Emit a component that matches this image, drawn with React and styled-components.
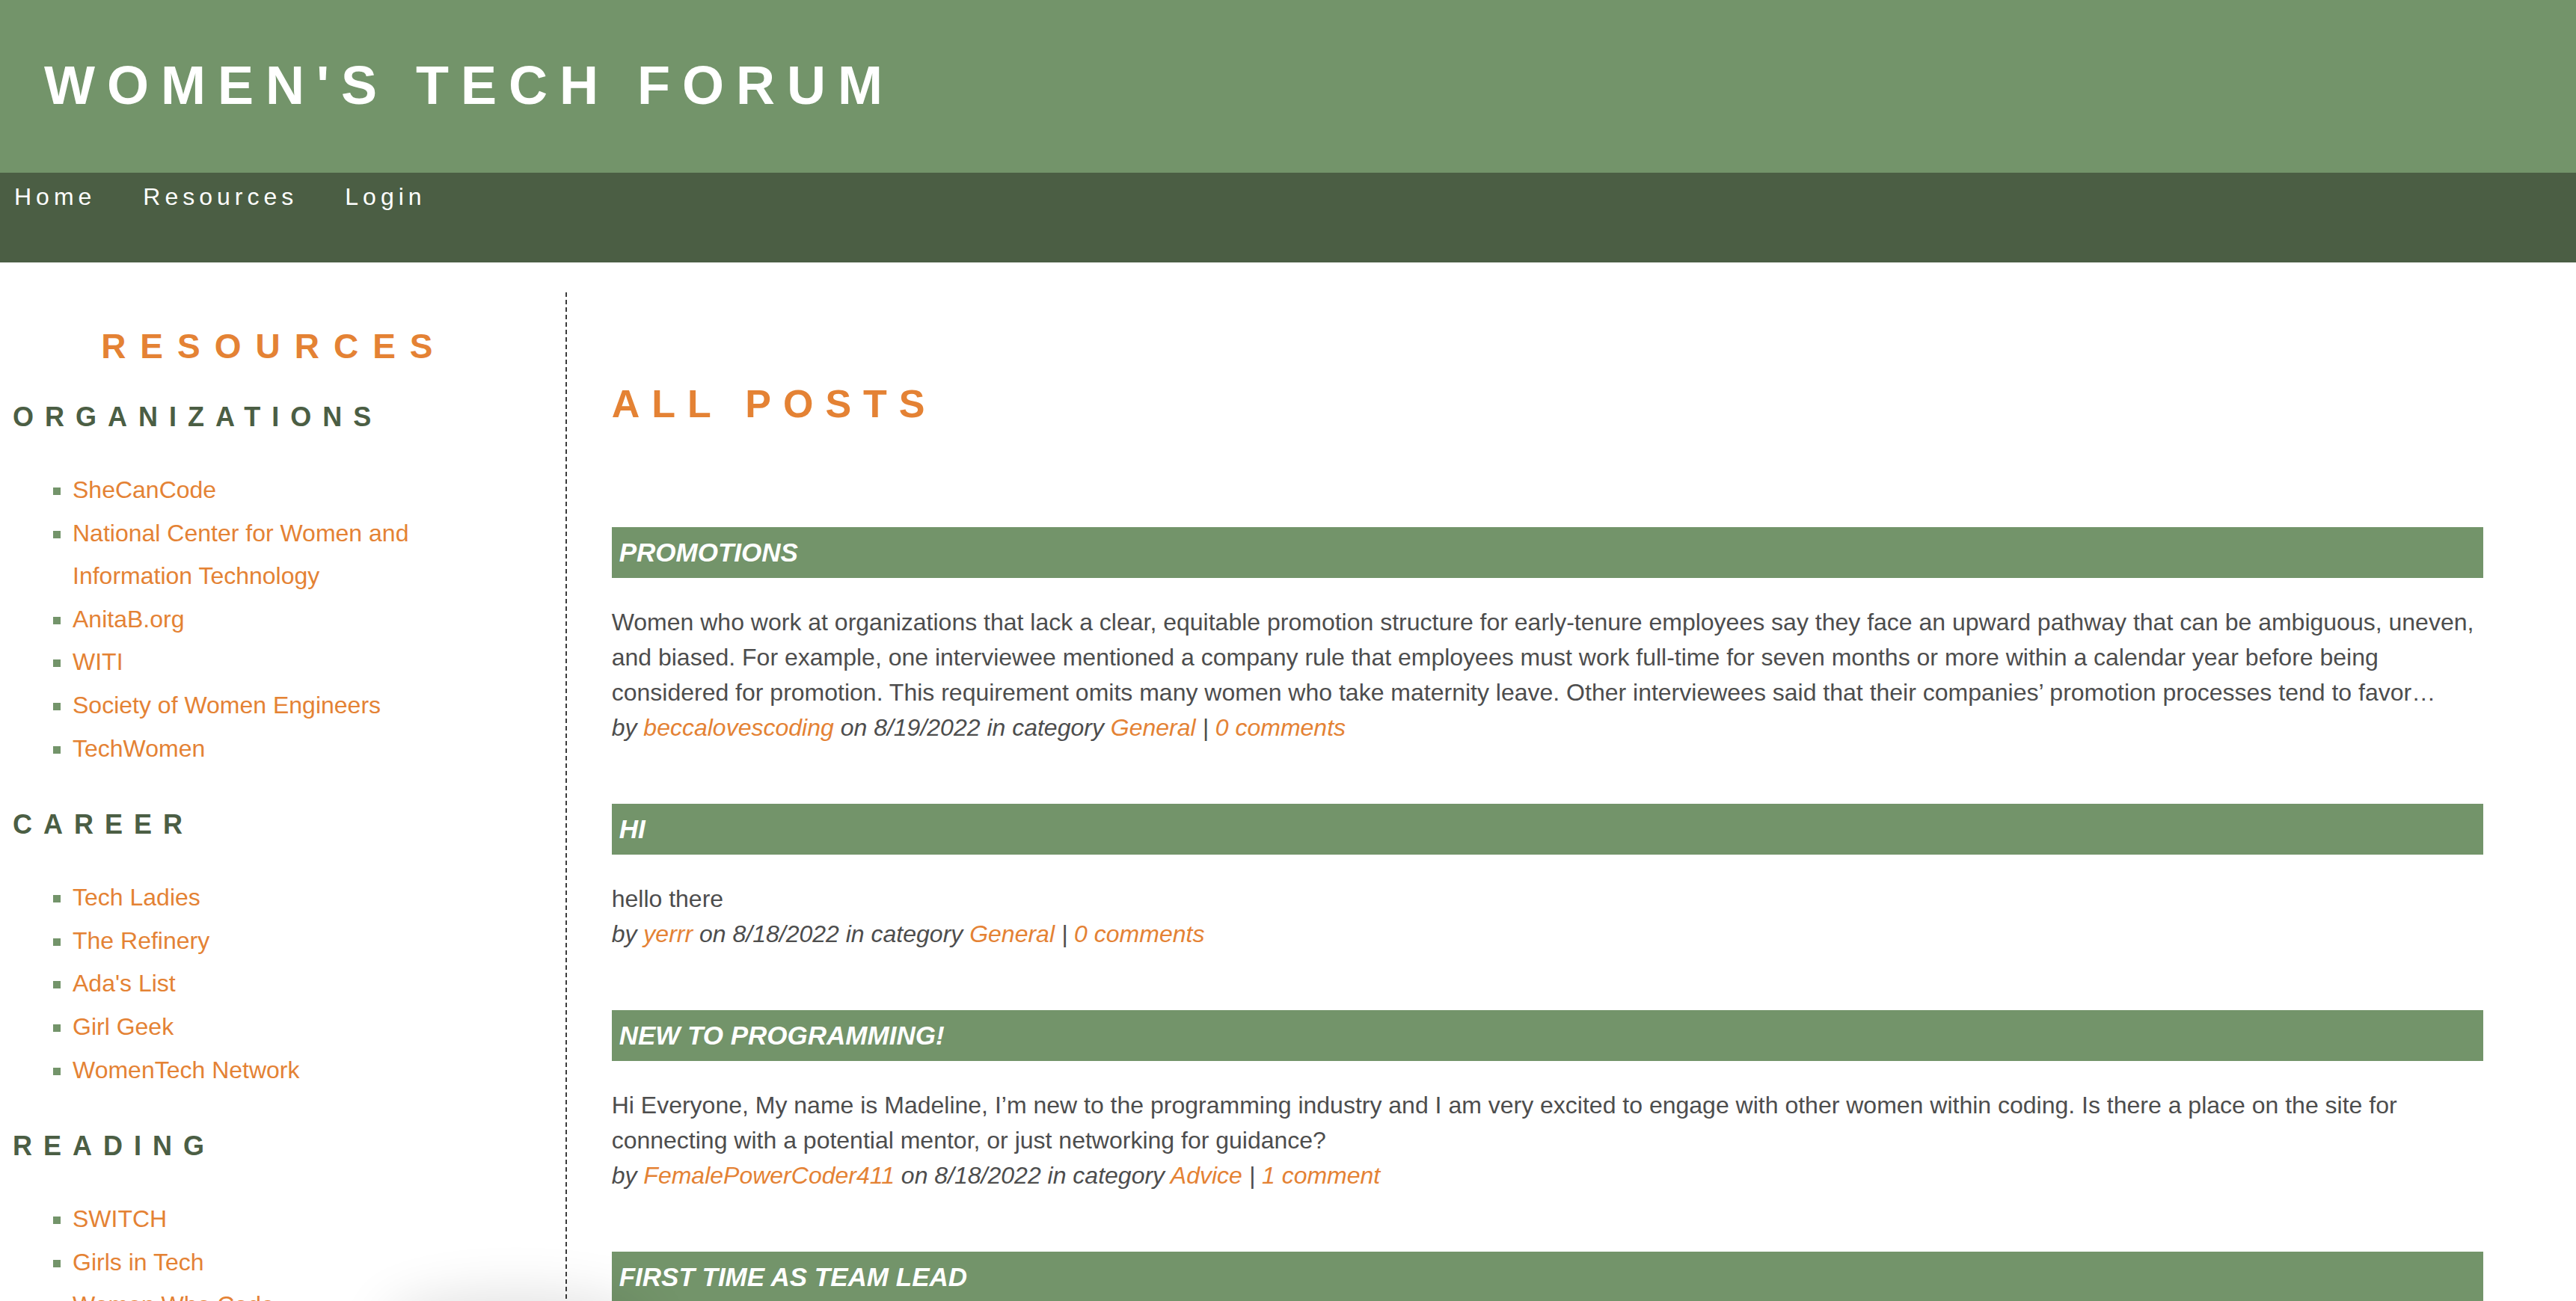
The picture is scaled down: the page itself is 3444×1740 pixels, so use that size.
import React from "react";
import styled, { createGlobalStyle } from "styled-components";

const organizations = [
  "SheCanCode",
  "National Center for Women and Information Technology",
  "AnitaB.org",
  "WITI",
  "Society of Women Engineers",
  "TechWomen",
];

const career = [
  "Tech Ladies",
  "The Refinery",
  "Ada's List",
  "Girl Geek",
  "WomenTech Network",
];

const reading = ["SWITCH", "Girls in Tech", "Women Who Code"];

const posts = [
  {
    title: "PROMOTIONS",
    body:
      "Women who work at organizations that lack a clear, equitable promotion structure for early-tenure employees say they face an upward pathway that can be ambiguous, uneven, and biased. For example, one interviewee mentioned a company rule that employees must work full-time for seven months or more within a calendar year before being considered for promotion. This requirement omits many women who take maternity leave. Other interviewees said that their companies\u2019 promotion processes tend to favor\u2026",
    author: "beccalovescoding",
    date: "8/19/2022",
    category: "General",
    comments: "0 comments",
  },
  {
    title: "HI",
    body: "hello there",
    author: "yerrr",
    date: "8/18/2022",
    category: "General",
    comments: "0 comments",
  },
  {
    title: "NEW TO PROGRAMMING!",
    body:
      "Hi Everyone, My name is Madeline, I\u2019m new to the programming industry and I am very excited to engage with other women within coding. Is there a place on the site for connecting with a potential mentor, or just networking for guidance?",
    author: "FemalePowerCoder411",
    date: "8/18/2022",
    category: "Advice",
    comments: "1 comment",
  },
  {
    title: "FIRST TIME AS TEAM LEAD",
  },
];

function App() {
  return (
    <>
      <GlobalStyle />
      <Header>
        <SiteTitle>WOMEN'S TECH FORUM</SiteTitle>
      </Header>
      <Nav>
        <NavLink href="#">Home</NavLink>
        <NavLink href="#">Resources</NavLink>
        <NavLink href="#">Login</NavLink>
      </Nav>

      <Layout>
        <Sidebar>
          <ResourcesTitle>RESOURCES</ResourcesTitle>
          <CategoryTitle>ORGANIZATIONS</CategoryTitle>
          <LinkList>
            {organizations.map((name) => (
              <li key={name}>
                <a href="#">{name}</a>
              </li>
            ))}
          </LinkList>
          <CategoryTitle>CAREER</CategoryTitle>
          <LinkList>
            {career.map((name) => (
              <li key={name}>
                <a href="#">{name}</a>
              </li>
            ))}
          </LinkList>
          <CategoryTitle>READING</CategoryTitle>
          <LinkList>
            {reading.map((name) => (
              <li key={name}>
                <a href="#">{name}</a>
              </li>
            ))}
          </LinkList>
        </Sidebar>

        <Main>
          <PageTitle>ALL POSTS</PageTitle>
          {posts.map((post) => (
            <Post key={post.title}>
              <PostTitle>{post.title}</PostTitle>
              {post.body && (
                <>
                  <PostBody>{post.body}</PostBody>
                  <PostMeta>
                    by <a href="#">{post.author}</a> on {post.date} in category{" "}
                    <a href="#">{post.category}</a> | <a href="#">{post.comments}</a>
                  </PostMeta>
                </>
              )}
            </Post>
          ))}
        </Main>
      </Layout>
      <BottomShade />
    </>
  );
}

const GlobalStyle = createGlobalStyle`
  body {
    margin: 0;
    background: #fff;
    font-family: "Liberation Sans", Arial, sans-serif;
    overflow: hidden;
  }
`;

const Header = styled.header`
  height: 231px;
  box-sizing: border-box;
  padding: 73px 0 0 59px;
  background-color: #73946a;
`;

const SiteTitle = styled.h1`
  margin: 0;
  font-size: 72px;
  font-weight: bold;
  line-height: normal;
  letter-spacing: 16px;
  color: #fff;
`;

const Nav = styled.nav`
  height: 120px;
  box-sizing: border-box;
  padding: 14px 0 0 19px;
  display: flex;
  align-items: flex-start;
  gap: 63px;
  background-color: #4b5e44;
`;

const NavLink = styled.a`
  font-size: 32px;
  line-height: normal;
  letter-spacing: 6px;
  color: #fff;
  text-decoration: none;
`;

const Layout = styled.div`
  display: flex;
  margin-top: 40px;
`;

const Sidebar = styled.aside`
  width: 22%;
  flex-shrink: 0;
  box-sizing: border-box;
  padding: 45px 40px 0 17px;
  border-right: 2px dashed #3c3c3c;
`;

const ResourcesTitle = styled.h2`
  margin: 0 0 47px;
  text-align: center;
  font-size: 46px;
  line-height: normal;
  letter-spacing: 19px;
  color: #e48234;
`;

const CategoryTitle = styled.h3`
  margin: 0;
  font-size: 36px;
  line-height: normal;
  letter-spacing: 15px;
  color: #4b5e44;
`;

const LinkList = styled.ul`
  margin: 48px 20px 52px 0;
  padding-left: 80px;
  list-style: square;

  li {
    font-size: 32px;
    line-height: 1.8;
  }

  li::marker {
    color: #73946a;
  }

  a {
    color: #e48234;
    text-decoration: none;
  }
`;

const Main = styled.main`
  flex: 1;
  min-width: 0;
  padding: 0 124px 0 60px;
`;

const PageTitle = styled.h1`
  margin: 119px 0 135px;
  font-size: 52px;
  line-height: normal;
  letter-spacing: 16px;
  color: #e48234;
`;

const Post = styled.article`
  margin-bottom: 78px;
`;

const PostTitle = styled.h2`
  margin: 0;
  padding: 14px 10px;
  font-size: 35px;
  font-style: italic;
  font-weight: bold;
  line-height: normal;
  color: #fff;
  background-color: #73946a;
`;

const PostBody = styled.p`
  margin: 36px 0 0;
  font-size: 32px;
  line-height: 47px;
  color: #4d4d4d;
`;

const PostMeta = styled.p`
  margin: 0;
  font-size: 32px;
  font-style: italic;
  line-height: 47px;
  color: #4d4d4d;

  a {
    color: #e48234;
    text-decoration: none;
  }
`;

const BottomShade = styled.div`
  position: fixed;
  left: 520px;
  bottom: -70px;
  width: 340px;
  height: 70px;
  border-radius: 50%;
  box-shadow: 0 0 70px 10px rgba(0, 0, 0, 0.12);
  pointer-events: none;
`;

export default App;
